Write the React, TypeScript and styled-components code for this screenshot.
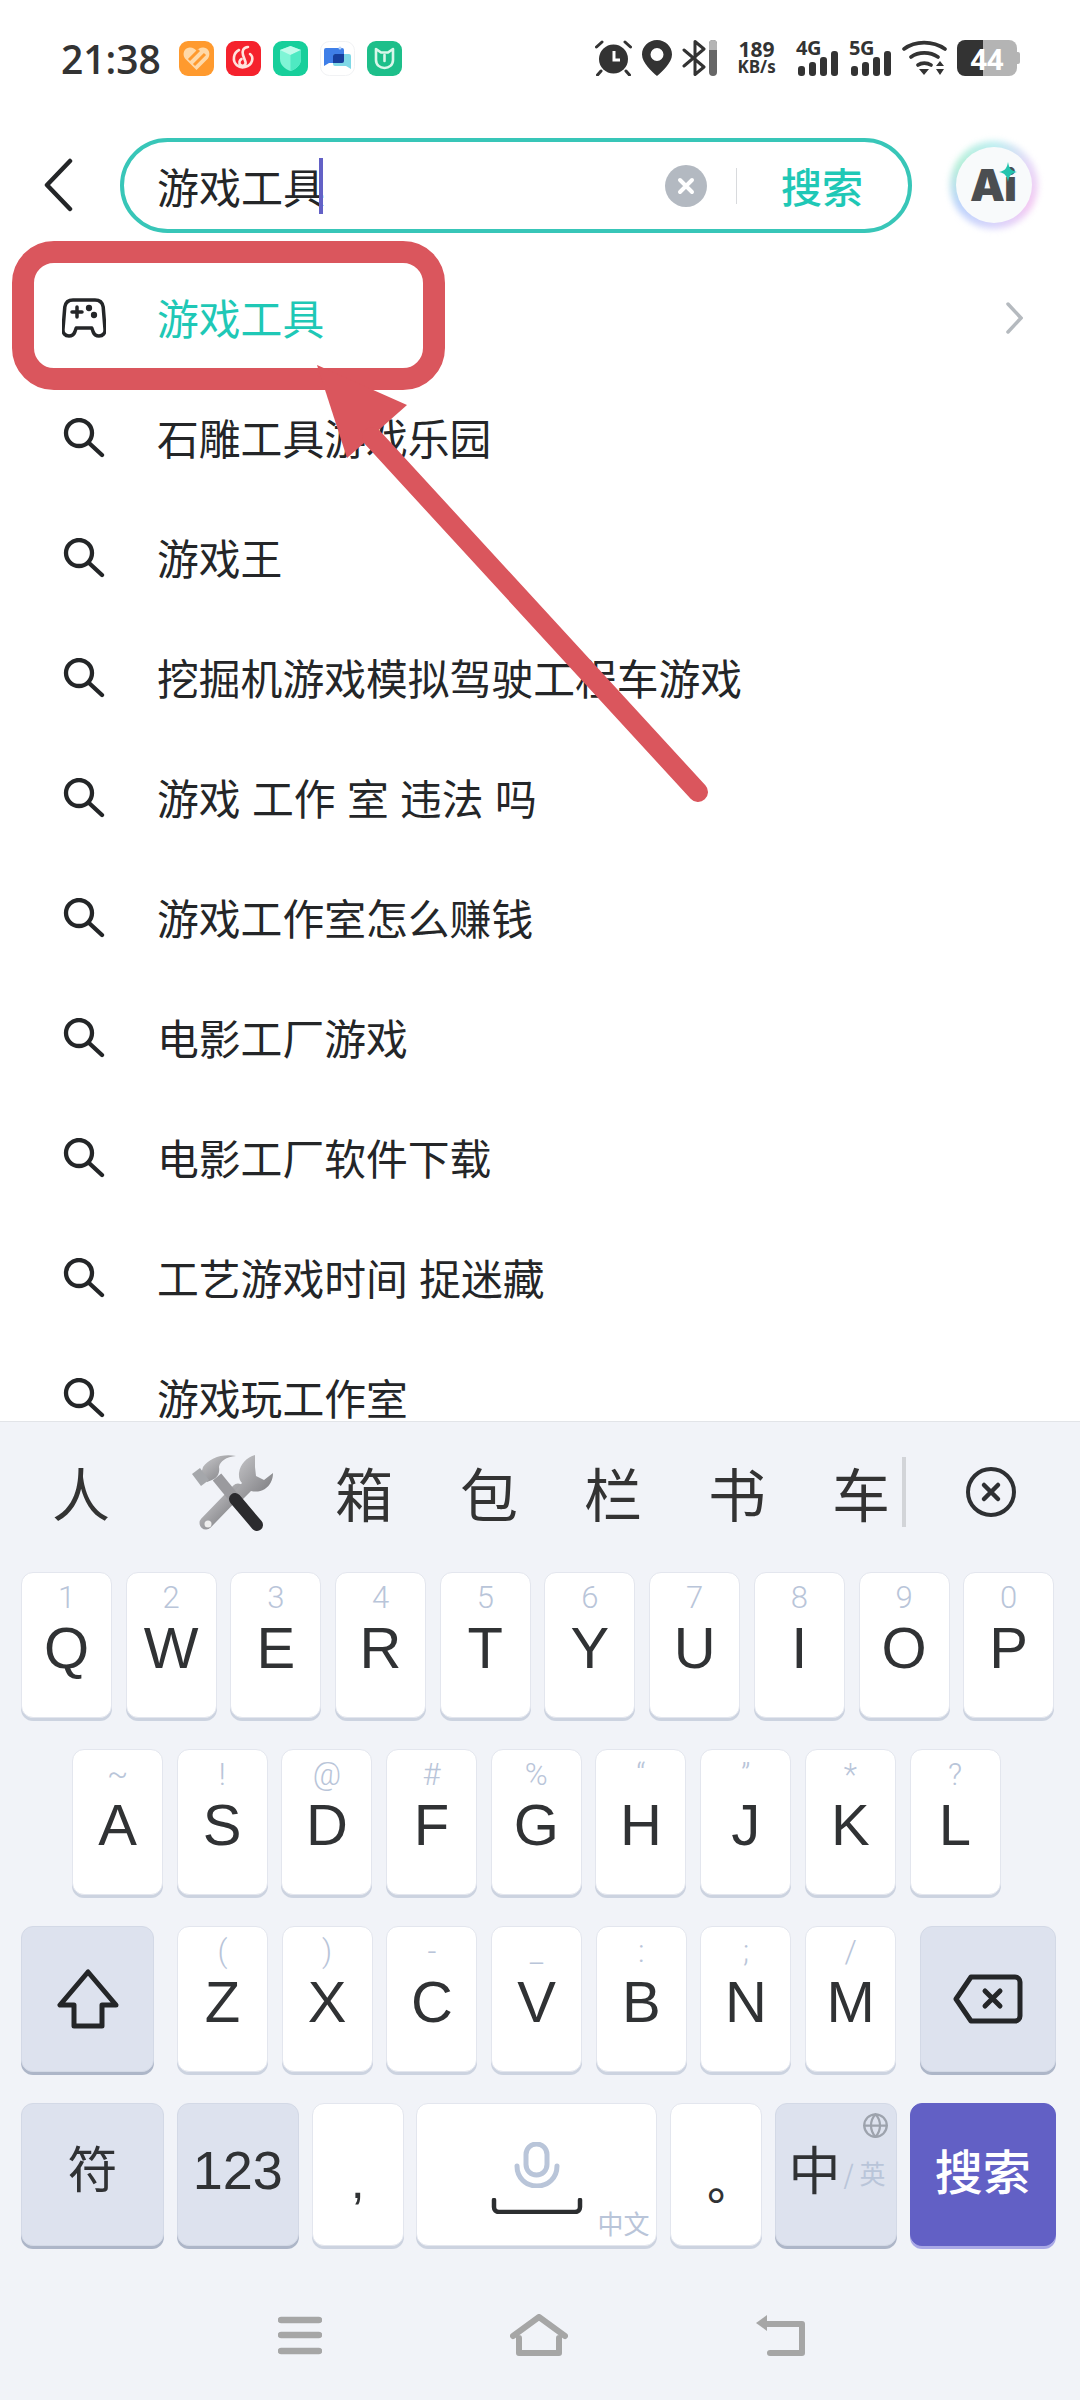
import React from 'react'
import styled, { createGlobalStyle } from 'styled-components'
import { Globe } from 'lucide-react'

const TEAL = '#1fc8b6'
const RED = '#da565d'
const HINT = '#b9c5d9'
const CJK = `"Noto Sans CJK SC", "Noto Sans", sans-serif`

const GlobalStyle = createGlobalStyle`
	html, body {
		margin: 0;
		padding: 0;
		background: #fff;
	}
	* {
		box-sizing: border-box;
	}
`

const Page = styled.div`
	position: relative;
	display: flex;
	flex-direction: column;
	width: 1080px;
	height: 2400px;
	overflow: hidden;
	background: #fff;
	color: #242628;
	font-family: ${CJK};
`

/* status bar */
const StatusBar = styled.div`
	display: flex;
	align-items: center;
	height: 116px;
	padding: 0 60px 0 61px;
	color: #333;
`
const Clock = styled.span`
	font-family: 'Open Sans', sans-serif;
	font-size: 39px;
	font-weight: 600;
	line-height: 1;
`
const AppIcons = styled.div`
	display: flex;
	gap: 12px;
	margin-left: 18px;
`
const StatusIcons = styled.div`
	display: flex;
	align-items: center;
	gap: 10px;
	margin-left: auto;
`
const Speed = styled.div`
	display: flex;
	flex-direction: column;
	align-items: center;
	width: 43px;
	margin: 0 8px;
	font-family: 'Open Sans', sans-serif;
	font-weight: 700;
	line-height: 18px;
	white-space: nowrap;
`
const SpeedValue = styled.span`
	font-size: 21px;
`
const SpeedUnit = styled.span`
	font-size: 17px;
`
const Signal = styled.div`
	display: grid;
	width: 43px;
	height: 36px;
	> * {
		grid-area: 1 / 1;
	}
`
const SignalLabel = styled.span`
	margin-top: -1px;
	font-family: 'Open Sans', sans-serif;
	font-size: 20px;
	font-weight: 700;
	letter-spacing: -0.5px;
	line-height: 18px;
`
const Battery = styled.div`
	position: relative;
	display: flex;
	align-items: center;
	justify-content: center;
	width: 60px;
	height: 36px;
	margin-right: 3px;
	border-radius: 8px;
	background: linear-gradient(90deg, #333 43%, #b4b4b4 43%);
	color: #fff;
	font-family: 'Open Sans', sans-serif;
	font-size: 29px;
	font-weight: 700;
	&::after {
		content: '';
		position: absolute;
		right: -3px;
		top: 12px;
		width: 3px;
		height: 12px;
		border-radius: 0 2px 2px 0;
		background: #b4b4b4;
	}
`

/* search header */
const Header = styled.div`
	display: flex;
	align-items: flex-start;
	height: 142px;
	padding: 22px 0 0 44px;
`
const BackButton = styled.div`
	display: flex;
	width: 76px;
	padding-top: 20px;
`
const SearchBar = styled.div`
	display: flex;
	align-items: center;
	width: 792px;
	height: 95px;
	padding: 0 45px 0 33px;
	border: 4px solid #38c6b8;
	border-radius: 48px;
`
const Query = styled.span`
	font-size: 42px;
	line-height: 1;
`
const Caret = styled.span`
	width: 4px;
	height: 56px;
	margin-left: -6px;
	background: #6361c6;
`
const ClearButton = styled.div`
	display: flex;
	align-items: center;
	justify-content: center;
	width: 42px;
	height: 42px;
	margin-left: auto;
	border-radius: 50%;
	background: #b3b9c1;
`
const SearchDivider = styled.span`
	width: 1px;
	height: 36px;
	margin: 0 44px 0 29px;
	background: #d8dadd;
`
const SearchAction = styled.span`
	color: ${TEAL};
	font-size: 41px;
	font-weight: 500;
	line-height: 1;
`
const AiButton = styled.div`
	position: relative;
	isolation: isolate;
	display: flex;
	align-items: center;
	justify-content: center;
	width: 76px;
	height: 76px;
	margin: 9px 0 0 44px;
	&::before {
		content: '';
		position: absolute;
		inset: -6px;
		z-index: -2;
		border-radius: 50%;
		background: conic-gradient(#bdeef0, #e6d8f8, #f3c9f2, #d8d4fb, #bcd3fb, #b5efd8, #bdeef0);
		filter: blur(3px);
	}
	&::after {
		content: '';
		position: absolute;
		inset: 0;
		z-index: -1;
		border-radius: 50%;
		background: #f8fafb;
	}
`
const AiLabel = styled.span`
	margin-left: -2px;
	color: #4b4e51;
	font-family: Inter, sans-serif;
	font-size: 44px;
	font-weight: 900;
	letter-spacing: -1px;
	line-height: 1;
`
const AiSparkle = styled.svg`
	position: absolute;
	left: 43px;
	top: 15px;
`

/* suggestions */
const List = styled.div`
	display: flex;
	flex-direction: column;
	flex: none;
	height: 1163px;
	overflow: hidden;
`
const Row = styled.div`
	display: flex;
	flex: none;
	align-items: center;
	height: 120px;
	padding: 0 57px 0 62px;
`
const RowIcon = styled.div`
	display: flex;
	flex: none;
	width: 95px;
`
const RowText = styled.span<{ $accent?: boolean }>`
	color: ${(p) => (p.$accent ? TEAL : '#242628')};
	font-size: 41.8px;
	font-weight: 400;
	line-height: 1;
	word-spacing: 2px;
	white-space: pre;
`
const RowChevron = styled.svg`
	margin-left: auto;
`

/* annotation on top of the list */
const Highlight = styled.div`
	position: absolute;
	left: 12px;
	top: 241px;
	width: 433px;
	height: 149px;
	border: 22px solid ${RED};
	border-radius: 42px;
`
const ArrowMark = styled.svg`
	position: absolute;
	left: 300px;
	top: 350px;
`

/* keyboard */
const Keyboard = styled.div`
	display: flex;
	flex: 1;
	flex-direction: column;
	border-top: 1px solid #e2e4e8;
	background: #f1f3f8;
`
const Candidates = styled.div`
	display: flex;
	flex: none;
	align-items: center;
	height: 150px;
	padding: 0 0 10px 52px;
`
const Candidate = styled.span<{ $ml?: number }>`
	margin-left: ${(p) => p.$ml ?? 66}px;
	color: #333;
	font-size: 58px;
	line-height: 1;
`
const ToolsEmoji = styled.svg`
	flex: none;
	margin-left: 57px;
	margin-top: 8px;
`
const CandidateDivider = styled.span`
	width: 4px;
	height: 70px;
	margin-left: 12px;
	background: #d2d4d8;
`
const DeleteCandidate = styled.svg`
	margin-left: 60px;
`
const KeyRows = styled.div`
	display: flex;
	flex-direction: column;
	gap: 31px;
`
const KeyRow = styled.div<{ $pl: number; $h?: number; $gap?: number }>`
	display: flex;
	gap: ${(p) => p.$gap ?? 13.7}px;
	height: ${(p) => p.$h ?? 146}px;
	padding-left: ${(p) => p.$pl}px;
`
const Key = styled.div<{ $w?: number; $ml?: number; $tone?: 'plain' | 'fn' | 'primary' }>`
	position: relative;
	display: flex;
	flex: none;
	align-items: center;
	justify-content: center;
	width: ${(p) => p.$w ?? 91}px;
	margin-left: ${(p) => p.$ml ?? 0}px;
	border: 1px solid ${(p) => (p.$tone === 'fn' ? '#d3d9e6' : p.$tone === 'primary' ? '#6260c5' : '#e3e6ee')};
	border-radius: 12px;
	background: ${(p) => (p.$tone === 'fn' ? '#dde2ee' : p.$tone === 'primary' ? '#6260c5' : '#fff')};
	box-shadow: 0 3px 0 ${(p) => (p.$tone === 'fn' ? '#adb6c8' : p.$tone === 'primary' ? '#a9a8e6' : '#ccd3e0')};
	color: ${(p) => (p.$tone === 'primary' ? '#fff' : '#303234')};
`
const LetterKeyBody = styled.div`
	display: flex;
	flex-direction: column;
	align-items: center;
	width: 100%;
	height: 100%;
	padding-top: 7px;
`
const KeyHint = styled.span`
	height: 36px;
	color: ${HINT};
	font-family: Roboto, sans-serif;
	font-size: 31px;
	font-weight: 300;
	line-height: 36px;
`
const KeyLetter = styled.span`
	height: 64px;
	font-family: 'Liberation Sans', sans-serif;
	font-size: 58px;
	font-weight: 400;
	line-height: 64px;
`
const KeyGlyph = styled.span<{ $size: number; $font?: string; $mt?: number; $pl?: number; $weight?: number }>`
	margin-top: ${(p) => p.$mt ?? 0}px;
	padding-left: ${(p) => p.$pl ?? 0}px;
	font-family: ${(p) => p.$font ?? CJK};
	font-size: ${(p) => p.$size}px;
	font-weight: ${(p) => p.$weight ?? 400};
	line-height: 1;
`
const SpaceBody = styled.div`
	display: flex;
	flex-direction: column;
	align-items: center;
	gap: 10px;
	margin-top: 6px;
`
const SpaceBadge = styled.span`
	position: absolute;
	right: 7px;
	bottom: 9px;
	color: ${HINT};
	font-size: 26px;
	line-height: 1;
`
const LangGlobe = styled.span`
	position: absolute;
	right: 7px;
	top: 8px;
	display: flex;
	color: #9da3ad;
`
const LangBody = styled.div`
	display: flex;
	align-items: center;
	align-self: center;
	margin: -14px 0 0 2px;
`
const LangAlt = styled.span`
	margin: 10px 0 0 3px;
	color: ${HINT};
	font-size: 26px;
	line-height: 1;
	white-space: nowrap;
`

/* nav bar */
const NavBar = styled.div`
	display: flex;
	align-items: center;
	gap: 188px;
	height: 42px;
	margin-top: 68px;
	padding-left: 278px;
`

const HeartApp = () => (
	<svg width="35" height="35" viewBox="0 0 35 35">
		<rect width="35" height="35" rx="9" fill="#ff9a2e" />
		<path d="M17.5 29 6 17.5C3 13 5 7 10.500 6.500c3-.2 5.500 1 7 3.500 1.500-2.500 4-3.700 7-3.500C30 7 32 13 29 17.500z" fill="#ffd9a8" />
		<path d="M10 19 20 9M15 24 26 13" stroke="#ff9a2e" strokeWidth="3" />
	</svg>
)
const MusicApp = () => (
	<svg width="35" height="35" viewBox="0 0 35 35" fill="none">
		<rect width="35" height="35" rx="9" fill="#f5222d" />
		<path d="M22 6c-5 .5-6 4-5 8l2.500 7c.8 3-3 5-5 3-2-2-1-5 1-6M24 13c4 3 3 11-5 13-6 1.500-12-3-11-10 .5-3.500 3-6 5-7" stroke="#ffe3dd" strokeWidth="2.600" strokeLinecap="round" />
	</svg>
)
const ShieldApp = () => (
	<svg width="35" height="35" viewBox="0 0 35 35">
		<rect width="35" height="35" rx="9" fill="#17cf9b" />
		<path d="M7 9 17.500 5 28 9v9c0 6-5 10-10.500 12C12 28 7 24 7 18z" fill="#7ff5d6" />
		<path d="M7 9 17.500 14 28 9 17.500 5z" fill="#c0fbea" />
		<path d="M17.500 14 28 9v9c0 6-5 10-10.500 12z" fill="#4fe9c2" />
	</svg>
)
const ChatApp = () => (
	<svg width="35" height="35" viewBox="0 0 35 35">
		<rect x=".5" y=".5" width="34" height="34" rx="9" fill="#fff" stroke="#f1f2f4" />
		<path d="M4 9a2 2 0 0 1 2-2h16a2 2 0 0 1 2 2v11a2 2 0 0 1-2 2H9l-5 3z" fill="#3f7fe8" />
		<path d="M13 15a2 2 0 0 1 2-2h14a2 2 0 0 1 2 2v13l-5-3H15a2 2 0 0 1-2-2z" fill="#7fd8e6" />
		<path d="M13 15a2 2 0 0 1 2-2h9v7a2 2 0 0 1-2 2h-9z" fill="#163f9e" />
		<circle cx="20" cy="7" r="1.500" fill="#bcd5fa" />
	</svg>
)
const MiApp = () => (
	<svg width="35" height="35" viewBox="0 0 35 35" fill="none">
		<rect width="35" height="35" rx="9" fill="#1dbf8a" />
		<path d="M9 8v11c0 5 4 8 8.500 8s8.500-3 8.500-8V8l-5 3.500h-7z" stroke="#d9f7ea" strokeWidth="2.600" strokeLinejoin="round" />
		<path d="M17.500 14v6" stroke="#d9f7ea" strokeWidth="2.600" strokeLinecap="round" />
	</svg>
)

const AlarmIcon = () => (
	<svg width="37" height="36" viewBox="0 0 37 36" fill="#333">
		<circle cx="18.500" cy="19" r="14.500" />
		<path d="M19 11v9h6" stroke="#fff" strokeWidth="3" fill="none" />
		<path d="M1.500 7 7 2M35.500 7 30 2M6 31l-3.500 4M31 31l3.500 4" stroke="#333" strokeWidth="3" strokeLinecap="round" />
	</svg>
)
const PinIcon = () => (
	<svg width="30" height="36" viewBox="0 0 30 36">
		<path fillRule="evenodd" d="M15 0c8.300 0 15 6.500 15 14.500C30 23 20 31.500 15 36 10 31.500 0 23 0 14.500 0 6.500 6.700 0 15 0zm0 8a6.500 6.500 0 1 0 0 13 6.500 6.500 0 0 0 0-13z" fill="#333" />
	</svg>
)
const BluetoothIcon = () => (
	<svg width="35" height="36" viewBox="0 0 35 36" fill="none">
		<path d="M2 10l20 17-9 7.500V1.500l9 7.500L2 26" stroke="#333" strokeWidth="3" strokeLinejoin="round" strokeLinecap="round" />
		<rect x="27" width="8" height="36" rx="4" fill="#666" />
		<path d="M27 10V4a4 4 0 0 1 8 0v6z" fill="#b4b4b4" />
	</svg>
)
const SignalBars = () => (
	<svg width="43" height="36" viewBox="0 0 43 36" fill="#333">
		<rect x="2" y="26" width="7" height="10" rx="3" />
		<rect x="13" y="22" width="7" height="14" rx="3" />
		<rect x="24" y="17" width="7" height="19" rx="3" />
		<rect x="35" y="11" width="7" height="25" rx="3" />
	</svg>
)
const WifiIcon = () => (
	<svg width="45" height="36" viewBox="0 0 45 36" fill="none">
		<path d="M2 9c11-8.500 29-8.500 41 0M9 17c7.500-5.500 19-5.500 27 0M16 25c3.500-2.500 9-2.500 13 0" stroke="#333" strokeWidth="3.600" strokeLinecap="round" />
		<path d="M17 29h10l-5 6zM34 26l4-5 4 5zM34 29l4 6 4-6z" fill="#333" />
	</svg>
)

const SearchIcon = () => (
	<svg width="44" height="40" viewBox="0 0 44 40" fill="none" stroke="#242628" strokeWidth="4.300" strokeLinecap="round">
		<circle cx="17" cy="15" r="13" />
		<path d="M27 25l13 12" />
	</svg>
)
const GameIcon = () => (
	<svg width="44" height="42" viewBox="0 0 44 42" fill="none" stroke="#242628" strokeWidth="3.500" strokeLinejoin="round">
		<path d="M11 3h22c4.500 0 7.500 2.800 8.200 7L43 32c.4 4-2 7-6 7-2.800 0-4.800-1.400-5.800-4l-1.400-4H14.200l-1.400 4c-1 2.600-3 4-5.800 4-4 0-6.400-3-6-7L2.800 10C3.500 5.800 6.500 3 11 3z" />
		<path d="M10 15h10M15 10v10" strokeLinecap="round" />
		<circle cx="27" cy="11" r="1.400" fill="#242628" />
		<circle cx="32" cy="18" r="1.400" fill="#242628" />
	</svg>
)

const ToolsGlyph = () => (
	<ToolsEmoji width="130" height="110" viewBox="0 0 130 110" fill="none">
		<defs>
			<linearGradient id="steel" x1="0" y1="0" x2="1" y2="1">
				<stop offset="0" stopColor="#c9c9cc" />
				<stop offset="1" stopColor="#77777b" />
			</linearGradient>
		</defs>
		{/* wrench */}
		<path d="M71 49 39 82" stroke="url(#steel)" strokeWidth="13" strokeLinecap="round" />
		<circle cx="41" cy="83" r="3.500" fill="#eee" />
		<path d="M88 14c-8 2-15 9-16 18-.4 5 1 8 3 10l-8 9 8 8 9-9c8 2 16-1 20-9 1.500-3 2-6 2-9l-9 7-8-4-1-9z" fill="url(#steel)" />
		{/* hammer */}
		<path d="M50 36 68 58" stroke="#9a9a9e" strokeWidth="11" />
		<path d="M68 58 90 84" stroke="#2b2b2e" strokeWidth="12" strokeLinecap="round" />
		<path d="M36 26c6-9 20-14 33-11-10 1-16 5-17 11 1 5-1 11-7 13l-5 2-6-8z" fill="url(#steel)" />
		<path d="M25 33l8-6 9 12-8 6z" fill="#a5a7ab" />
	</ToolsEmoji>
)

const rowOne = [['1', 'Q'], ['2', 'W'], ['3', 'E'], ['4', 'R'], ['5', 'T'], ['6', 'Y'], ['7', 'U'], ['8', 'I'], ['9', 'O'], ['0', 'P']]
const rowTwo = [['~', 'A'], ['!', 'S'], ['@', 'D'], ['#', 'F'], ['%', 'G'], ['“', 'H'], ['”', 'J'], ['*', 'K'], ['?', 'L']]
const rowThree = [['(', 'Z'], [')', 'X'], ['-', 'C'], ['_', 'V'], [':', 'B'], [';', 'N'], ['/', 'M']]

const suggestions = [
	'石雕工具游戏乐园',
	'游戏王',
	'挖掘机游戏模拟驾驶工程车游戏',
	'游戏 工作 室 违法 吗',
	'游戏工作室怎么赚钱',
	'电影工厂游戏',
	'电影工厂软件下载',
	'工艺游戏时间 捉迷藏',
	'游戏玩工作室',
]

const LetterKey: React.FC<{ hint: string; letter: string; ml?: number }> = ({ hint, letter, ml }) => (
	<Key $ml={ml}>
		<LetterKeyBody>
			<KeyHint>{hint}</KeyHint>
			<KeyLetter>{letter}</KeyLetter>
		</LetterKeyBody>
	</Key>
)

export default function App() {
	return (
		<Page>
			<GlobalStyle />
			<StatusBar>
				<Clock>21:38</Clock>
				<AppIcons>
					<HeartApp />
					<MusicApp />
					<ShieldApp />
					<ChatApp />
					<MiApp />
				</AppIcons>
				<StatusIcons>
					<AlarmIcon />
					<PinIcon />
					<BluetoothIcon />
					<Speed>
						<SpeedValue>189</SpeedValue>
						<SpeedUnit>KB/s</SpeedUnit>
					</Speed>
					<Signal>
						<SignalLabel>4G</SignalLabel>
						<SignalBars />
					</Signal>
					<Signal>
						<SignalLabel>5G</SignalLabel>
						<SignalBars />
					</Signal>
					<WifiIcon />
					<Battery>44</Battery>
				</StatusIcons>
			</StatusBar>

			<Header>
				<BackButton>
					<svg width="30" height="54" viewBox="0 0 30 54" fill="none" stroke="#242628" strokeWidth="4.500" strokeLinecap="round" strokeLinejoin="round">
						<path d="M26 3 3 27l23 24" />
					</svg>
				</BackButton>
				<SearchBar>
					<Query>游戏工具</Query>
					<Caret />
					<ClearButton>
						<svg width="20" height="20" viewBox="0 0 20 20" stroke="#fff" strokeWidth="4" strokeLinecap="round">
							<path d="M4 4l12 12M16 4 4 16" />
						</svg>
					</ClearButton>
					<SearchDivider />
					<SearchAction>搜索</SearchAction>
				</SearchBar>
				<AiButton>
					<AiLabel>Ai</AiLabel>
					<AiSparkle width="18" height="20" viewBox="0 0 18 20">
						<path d="M9 0c1 6 3 9 9 10-6 1-8 4-9 10-1-6-3-9-9-10 6-1 8-4 9-10z" fill="#24c4ae" />
					</AiSparkle>
				</AiButton>
			</Header>

			<List>
				<Row>
					<RowIcon>
						<GameIcon />
					</RowIcon>
					<RowText $accent>游戏工具</RowText>
					<RowChevron width="17" height="32" viewBox="0 0 17 32" fill="none" stroke="#b5babf" strokeWidth="3.500" strokeLinecap="round">
						<path d="M2 2l13 14L2 30" />
					</RowChevron>
				</Row>
				{suggestions.map((text) => (
					<Row key={text}>
						<RowIcon>
							<SearchIcon />
						</RowIcon>
						<RowText>{text}</RowText>
					</Row>
				))}
			</List>

			<Keyboard>
				<Candidates>
					<Candidate $ml={0}>人</Candidate>
					<ToolsGlyph />
					<Candidate $ml={38}>箱</Candidate>
					<Candidate $ml={67}>包</Candidate>
					<Candidate>栏</Candidate>
					<Candidate>书</Candidate>
					<Candidate>车</Candidate>
					<CandidateDivider />
					<DeleteCandidate width="50" height="50" viewBox="0 0 50 50" fill="none" stroke="#2e3033" strokeLinecap="round">
						<circle cx="25" cy="25" r="23" strokeWidth="4" />
						<path d="M18 18l14 14M32 18 18 32" strokeWidth="4.500" />
					</DeleteCandidate>
				</Candidates>

				<KeyRows>
					<KeyRow $pl={21}>
						{rowOne.map(([hint, letter]) => (
							<LetterKey key={letter} hint={hint} letter={letter} />
						))}
					</KeyRow>
					<KeyRow $pl={72}>
						{rowTwo.map(([hint, letter]) => (
							<LetterKey key={letter} hint={hint} letter={letter} />
						))}
					</KeyRow>
					<KeyRow $pl={21}>
						<Key $w={133} $tone="fn">
							<svg width="64" height="60" viewBox="0 0 64 60" fill="none" stroke="#242628" strokeWidth="5" strokeLinejoin="round">
								<path d="M32 3 4 36h14v21h28V36h14z" />
							</svg>
						</Key>
						{rowThree.map(([hint, letter], i) => (
							<LetterKey key={letter} hint={hint} letter={letter} ml={i === 0 ? 9.3 : 0} />
						))}
						<Key $w={136} $ml={10.3} $tone="fn">
							<svg width="70" height="50" viewBox="0 0 70 50" fill="none" stroke="#242628" strokeWidth="5" strokeLinejoin="round">
								<path d="M18 3h44a5 5 0 0 1 5 5v34a5 5 0 0 1-5 5H18L3 25z" />
								<path d="M32 17l15 15M47 17 32 32" strokeLinecap="round" />
							</svg>
						</Key>
					</KeyRow>
					<KeyRow $pl={21} $h={143} $gap={12.8}>
						<Key $w={143} $tone="fn">
							<KeyGlyph $size={50} $mt={-18}>符</KeyGlyph>
						</Key>
						<Key $w={122} $tone="fn">
							<KeyGlyph $size={54} $font="'Liberation Sans', sans-serif" $mt={-9}>123</KeyGlyph>
						</Key>
						<Key $w={92}>
							<KeyGlyph $size={50} $font="'Liberation Sans', sans-serif" $mt={12}>,</KeyGlyph>
						</Key>
						<Key $w={241}>
							<SpaceBody>
								<svg width="46" height="46" viewBox="0 0 46 46" fill="none" stroke={HINT} strokeWidth="5" strokeLinecap="round">
									<rect x="12" y="2" width="21" height="31" rx="10.500" />
									<path d="M3 24c0 12 9 20 20 20s20-8 20-20" />
								</svg>
								<svg width="92" height="16" viewBox="0 0 92 16" fill="none" stroke="#2c2e30" strokeWidth="4.500" strokeLinecap="round" strokeLinejoin="round">
									<path d="M3 2v7c0 3 2 5 5 5h76c3 0 5-2 5-5V2" />
								</svg>
							</SpaceBody>
							<SpaceBadge>中文</SpaceBadge>
						</Key>
						<Key $w={92}>
							<KeyGlyph $size={46} $mt={8} $pl={28} $weight={500}>。</KeyGlyph>
						</Key>
						<Key $w={122} $tone="fn">
							<LangGlobe>
								<Globe size={27} strokeWidth={2} />
							</LangGlobe>
							<LangBody>
								<KeyGlyph $size={52}>中</KeyGlyph>
								<LangAlt>/ 英</LangAlt>
							</LangBody>
						</Key>
						<Key $w={146} $tone="primary">
							<KeyGlyph $size={48} $weight={500} $mt={-12}>搜索</KeyGlyph>
						</Key>
					</KeyRow>
				</KeyRows>

				<NavBar>
					<svg width="44" height="40" viewBox="0 0 44 40" stroke="#a6a6a6" strokeWidth="6.500" strokeLinecap="round">
						<path d="M3 5h38M3 20h38M3 36h38" />
					</svg>
					<svg width="58" height="42" viewBox="0 0 58 42" fill="none" stroke="#a6a6a6" strokeWidth="6" strokeLinecap="round" strokeLinejoin="round">
						<path d="M3 22 29 3l26 19M9 24v15h40V24" />
					</svg>
					<svg width="50" height="42" viewBox="0 0 50 42" fill="none">
						<path d="M10 10h36v29H14" stroke="#a6a6a6" strokeWidth="6" strokeLinecap="round" strokeLinejoin="round" />
						<path d="M0 9 11 1v16z" fill="#a6a6a6" />
					</svg>
				</NavBar>
			</Keyboard>

			<Highlight />
			<ArrowMark width="420" height="460" viewBox="300 350 420 460" fill={RED}>
				<path d="M317 365 407 405 372 436 347 458z" />
				<path d="M372 437 698 792" stroke={RED} strokeWidth="20" strokeLinecap="round" />
			</ArrowMark>
		</Page>
	)
}
